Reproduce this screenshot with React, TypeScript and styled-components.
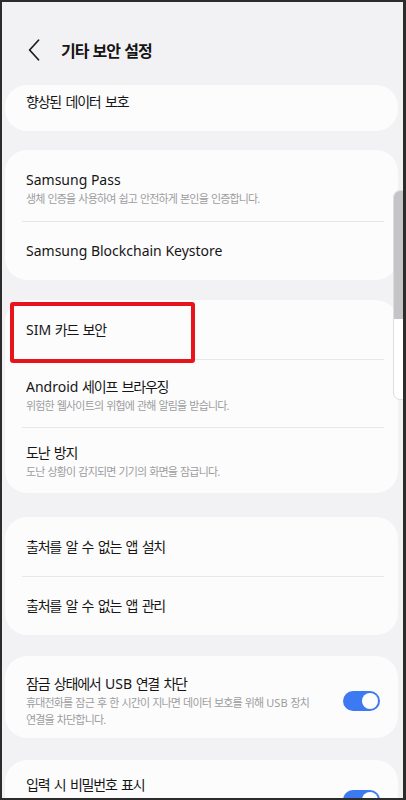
import React from "react";
import styled, { createGlobalStyle } from "styled-components";

const GlobalStyle = createGlobalStyle`
  html, body { margin: 0; padding: 0; background: #ffffff; }
  body { font-family: "Noto Sans", "Noto Sans CJK KR", sans-serif; }
  * { box-sizing: border-box; }
`;

const Frame = styled.div`
  position: relative;
  width: 406px;
  height: 800px;
  overflow: hidden;
  background: #f2f2f4;
  border: 2px solid #2c2c2c;
  border-right-width: 3px;
  font-family: "Noto Sans", "Noto Sans CJK KR", sans-serif;
`;

const Header = styled.header`
  height: 83px;
  display: flex;
  align-items: center;
  padding: 12px 0 0 26px;
  gap: 21px;
`;

const BackIcon = styled.svg`
  width: 12px;
  height: 22px;
  flex: none;
`;

const HeaderTitle = styled.h1`
  margin: 0;
  font-size: 16px;
  font-weight: 700;
  letter-spacing: -1px;
  word-spacing: 1px;
  color: #151515;
`;

const List = styled.main`
  display: flex;
  flex-direction: column;
  padding: 0 5px 0 3px;
`;

const Card = styled.section<{ $gap: number }>`
  margin-top: ${(p) => p.$gap}px;
  background: #fcfcfd;
  border-radius: 22px;
  display: flex;
  flex-direction: column;
`;

const Row = styled.div<{ $pt?: number; $pb?: number; $min?: number }>`
  position: relative;
  display: flex;
  align-items: center;
  min-height: ${(p) => p.$min ?? 0}px;
  padding: ${(p) => p.$pt ?? 0}px 18px ${(p) => p.$pb ?? 0}px 21px;
`;

const Ko = styled.span``;

const TextCol = styled.div<{ $top?: boolean }>`
  flex: 1;
  display: flex;
  flex-direction: column;
  align-self: ${(p) => (p.$top ? "flex-start" : "auto")};
`;

const Title = styled.div`
  font-size: 14px;
  line-height: 20px;
  font-weight: 400;
  color: #161616;
  white-space: nowrap;
  ${Ko} { letter-spacing: -1.2px; word-spacing: 2px; }
`;

const Sub = styled.div<{ $lh?: number }>`
  font-size: 11px;
  line-height: ${(p) => p.$lh ?? 18}px;
  color: #9d9d9f;
  white-space: nowrap;
  ${Ko} { letter-spacing: -0.85px; word-spacing: 1px; }
`;

const Divider = styled.hr`
  margin: 0 14px 0 17px;
  border: none;
  height: 1px;
  background: #e7e7e9;
`;

const Track = styled.div`
  position: relative;
  flex: none;
  width: 37px;
  height: 20px;
  border-radius: 10px;
  background: #3d7af2;
`;

const Knob = styled.div`
  position: absolute;
  top: 2px;
  right: 2px;
  width: 16px;
  height: 16px;
  border-radius: 50%;
  background: #ffffff;
`;

const Highlight = styled.div`
  position: absolute;
  left: 5px;
  top: 2px;
  width: 185px;
  height: 61px;
  border: 4px solid #e8141c;
  border-radius: 3px;
  pointer-events: none;
`;

const FastScroll = styled.div`
  position: absolute;
  top: 188px;
  left: 391px;
  width: 14px;
  height: 210px;
  border-radius: 7px 0 0 7px;
  border: 1px solid #dedee0;
  background: #ffffff;
  overflow: hidden;
`;

const ScrollThumb = styled.div`
  height: 128px;
  background: #c5c5c7;
`;

const ko = (text: string) =>
  text
    .split(/([\uAC00-\uD7A3][\uAC00-\uD7A3\s.]*)/)
    .filter(Boolean)
    .map((part, i) =>
      /[\uAC00-\uD7A3]/.test(part) ? <Ko key={i}>{part}</Ko> : <React.Fragment key={i}>{part}</React.Fragment>
    );

const Toggle = () => (
  <Track>
    <Knob />
  </Track>
);

export default function App() {
  return (
    <>
      <GlobalStyle />
      <Frame>
        <Header>
          <BackIcon viewBox="0 0 12 22">
            <path d="M10.5 1.2 L1.6 11 L10.5 20.8" fill="none" stroke="#1c1c1c" strokeWidth="1.7" strokeLinecap="round" strokeLinejoin="round" />
          </BackIcon>
          <HeaderTitle>기타 보안 설정</HeaderTitle>
        </Header>
        <List>
          <Card $gap={0}>
            <Row $min={46} $pb={12}>
              <Title>{ko("향상된 데이터 보호")}</Title>
            </Row>
          </Card>

          <Card $gap={19}>
            <Row $pt={20} $pb={13}>
              <TextCol>
                <Title>{ko("Samsung Pass")}</Title>
                <Sub>{ko("생체 인증을 사용하여 쉽고 안전하게 본인을 인증합니다.")}</Sub>
              </TextCol>
            </Row>
            <Divider />
            <Row $min={58}>
              <Title>Samsung Blockchain Keystore</Title>
            </Row>
          </Card>

          <Card $gap={20}>
            <Row $min={59}>
              <Title>{ko("SIM 카드 보안")}</Title>
              <Highlight />
            </Row>
            <Divider />
            <Row $pt={17} $pb={12}>
              <TextCol>
                <Title>{ko("Android 세이프 브라우징")}</Title>
                <Sub>{ko("위험한 웹사이트의 위협에 관해 알림을 받습니다.")}</Sub>
              </TextCol>
            </Row>
            <Divider />
            <Row $pt={15} $pb={12}>
              <TextCol>
                <Title>{ko("도난 방지")}</Title>
                <Sub>{ko("도난 상황이 감지되면 기기의 화면을 잠급니다.")}</Sub>
              </TextCol>
            </Row>
          </Card>

          <Card $gap={24}>
            <Row $min={59}>
              <Title>{ko("출처를 알 수 없는 앱 설치")}</Title>
            </Row>
            <Divider />
            <Row $min={58}>
              <Title>{ko("출처를 알 수 없는 앱 관리")}</Title>
            </Row>
          </Card>

          <Card $gap={21}>
            <Row $pt={18} $pb={10}>
              <TextCol>
                <Title>{ko("잠금 상태에서 USB 연결 차단")}</Title>
                <Sub $lh={17}>
                  {ko("휴대전화를 잠근 후 한 시간이 지나면 데이터 보호를 위해 USB 장치")}
                  <br />
                  {ko("연결을 차단합니다.")}
                </Sub>
              </TextCol>
              <Toggle />
            </Row>
          </Card>

          <Card $gap={22}>
            <Row $pt={15} $min={64}>
              <TextCol $top>
                <Title>{ko("입력 시 비밀번호 표시")}</Title>
              </TextCol>
              <Toggle />
            </Row>
          </Card>
        </List>
        <FastScroll>
          <ScrollThumb />
        </FastScroll>
      </Frame>
    </>
  );
}
